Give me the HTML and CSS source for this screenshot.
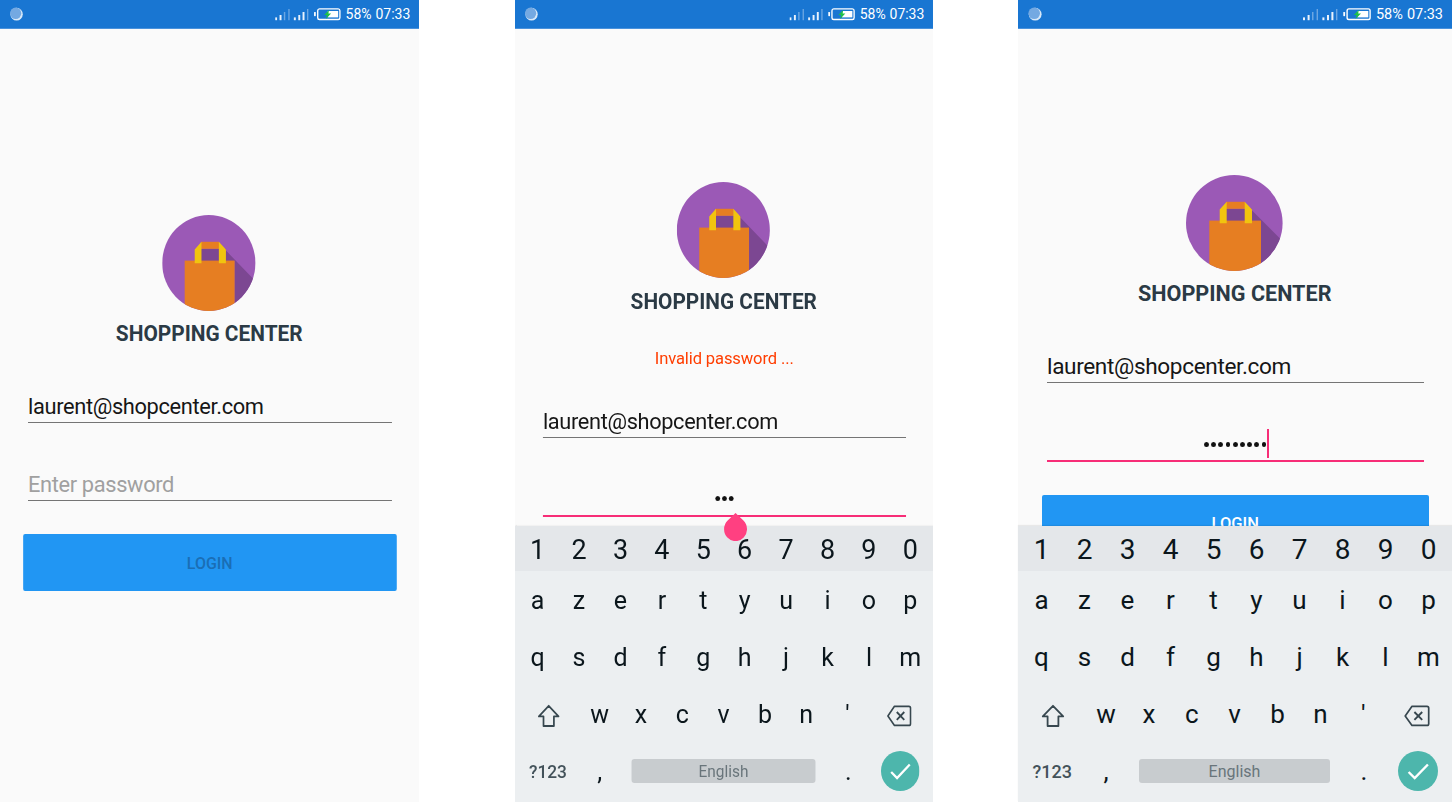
FILE: index.html
```html
<!DOCTYPE html>
<html lang="en">
<head>
<meta charset="utf-8">
<title>Shopping Center</title>
<link rel="stylesheet" href="styles.css">
</head>
<body>
<svg class="defs" aria-hidden="true">
  <defs>
    <clipPath id="disc"><ellipse cx="48.3" cy="48" rx="48.3" ry="48"/></clipPath>
    <symbol id="logo" viewBox="0 0 97 96">
      <g clip-path="url(#disc)">
        <rect width="97" height="96" fill="#9b59b6"/>
        <path d="M64 33.5 97 66.5V96H75V46H66V34z" fill="#7c4792"/>
        <rect x="40" y="34" width="19.5" height="13" fill="#7c4792"/>
        <rect x="23.3" y="45.6" width="51.7" height="51" fill="#e67e22"/>
        <rect x="40" y="26.8" width="19" height="7" fill="#e67e22"/>
        <path d="M33.7 34.5 40.7 26.8V48.2H33.7zM66 34.5 58.7 26.8V48.2H66z" fill="#f1c40f"/>
      </g>
    </symbol>
    <symbol id="dot" viewBox="0 0 14 14">
      <circle cx="7.2" cy="7.2" r="6.4" fill="#d7e8f8"/>
      <circle cx="6.2" cy="6.3" r="5.8" fill="#74a9e2"/>
    </symbol>
    <symbol id="status" viewBox="0 0 69 14">
      <g fill="#e9f2fc">
        <rect x="0" y="10.4" width="2" height="2.8"/><rect x="4.6" y="8" width="2" height="5.2"/>
        <rect x="19.4" y="10.4" width="2" height="2.8"/><rect x="24" y="8" width="2" height="5.2"/><rect x="28.4" y="5" width="2" height="8.2"/>
      </g>
      <g fill="#6ba6e2">
        <rect x="9" y="5" width="1.5" height="8.2"/><rect x="13.6" y="2" width="1.4" height="11.2"/>
        <rect x="33" y="2" width="1.4" height="11.2"/>
      </g>
      <rect x="40.3" y="5" width="1.8" height="4.2" rx=".6" fill="#fff"/>
      <rect x="44.1" y="1.9" width="23" height="10.6" rx="1.8" fill="none" stroke="#fff" stroke-width="1.4"/>
      <rect x="54.5" y="4" width="10.8" height="6.4" fill="#fff"/>
      <path d="M55.8 3 50.8 7.9h2.8L52.6 12 58 6.6h-2.8z" fill="#1fc04a"/>
    </symbol>
    <symbol id="shift" viewBox="0 0 24 24">
      <path d="M12 1.8 22.2 12.4H17.4V22H6.6V12.4H1.8z" fill="none" stroke="#37474f" stroke-width="1.8" stroke-linejoin="round"/>
    </symbol>
    <symbol id="erase" viewBox="0 0 26 22">
      <path d="M8 1.3H23q1.7 0 1.7 1.7V18.7q0 1.7-1.7 1.7H8L1.2 10.9z" fill="none" stroke="#37474f" stroke-width="1.7" stroke-linejoin="round"/>
      <path d="M10.4 7 18.2 14.8M18.2 7 10.4 14.8" stroke="#37474f" stroke-width="1.9"/>
    </symbol>
    <symbol id="done" viewBox="0 0 40 40">
      <circle cx="20" cy="20" r="20" fill="#4db6ac"/>
      <path d="M10.6 21 16.7 27 29.9 13.5" fill="none" stroke="#fff" stroke-width="2.4"/>
    </symbol>
    <symbol id="handle" viewBox="0 0 24 28">
      <path d="M12 0 20.2 7.6A11.9 11.9 0 1 1 3.8 7.6z" fill="#ff4081"/>
    </symbol>
  </defs>
</svg>

<main class="board">
  <section class="slot slot-a">
    <div class="phone">
      <header class="status"><svg class="dot"><use href="#dot"/></svg><svg class="signals"><use href="#status"/></svg><span class="pct">58%</span><span class="time">07:33</span></header>
      <div class="form">
        <svg class="logo"><use href="#logo"/></svg>
        <h1 class="title">SHOPPING CENTER</h1>
        <div class="field email">laurent@shopcenter.com</div>
        <div class="field password hint">Enter password</div>
        <div class="login off">LOGIN</div>
      </div>
    </div>
  </section>

  <section class="slot slot-b">
    <div class="phone">
      <header class="status"><svg class="dot"><use href="#dot"/></svg><svg class="signals"><use href="#status"/></svg><span class="pct">58%</span><span class="time">07:33</span></header>
      <div class="form">
        <svg class="logo"><use href="#logo"/></svg>
        <h1 class="title">SHOPPING CENTER</h1>
        <p class="error">Invalid password ...</p>
        <div class="field email">laurent@shopcenter.com</div>
        <div class="field password active"><span class="dots"><i></i><i></i><i></i></span><svg class="handle"><use href="#handle"/></svg></div>
      </div>
      <div class="keyboard">
        <div class="row digits"><b>1</b><b>2</b><b>3</b><b>4</b><b>5</b><b>6</b><b>7</b><b>8</b><b>9</b><b>0</b></div>
        <div class="row"><b>a</b><b>z</b><b>e</b><b>r</b><b>t</b><b>y</b><b>u</b><b>i</b><b>o</b><b>p</b></div>
        <div class="row"><b>q</b><b>s</b><b>d</b><b>f</b><b>g</b><b>h</b><b>j</b><b>k</b><b>l</b><b>m</b></div>
        <div class="row split"><b><svg class="shift"><use href="#shift"/></svg></b><b>w</b><b>x</b><b>c</b><b>v</b><b>b</b><b>n</b><b>'</b><b><svg class="erase"><use href="#erase"/></svg></b></div>
        <div class="row bottom"><b class="mode">?123</b><b>,</b><b class="space">English</b><b>.</b><b><svg class="done"><use href="#done"/></svg></b></div>
      </div>
    </div>
  </section>

  <section class="slot slot-c">
    <div class="phone">
      <header class="status"><svg class="dot"><use href="#dot"/></svg><svg class="signals"><use href="#status"/></svg><span class="pct">58%</span><span class="time">07:33</span></header>
      <div class="form">
        <svg class="logo"><use href="#logo"/></svg>
        <h1 class="title">SHOPPING CENTER</h1>
        <div class="field email">laurent@shopcenter.com</div>
        <div class="field password active"><span class="dots"><i></i><i></i><i></i><i></i><i></i><i></i><i></i><i></i><i></i></span><span class="caret"></span></div>
        <div class="login">LOGIN</div>
      </div>
      <div class="keyboard">
        <div class="row digits"><b>1</b><b>2</b><b>3</b><b>4</b><b>5</b><b>6</b><b>7</b><b>8</b><b>9</b><b>0</b></div>
        <div class="row"><b>a</b><b>z</b><b>e</b><b>r</b><b>t</b><b>y</b><b>u</b><b>i</b><b>o</b><b>p</b></div>
        <div class="row"><b>q</b><b>s</b><b>d</b><b>f</b><b>g</b><b>h</b><b>j</b><b>k</b><b>l</b><b>m</b></div>
        <div class="row split"><b><svg class="shift"><use href="#shift"/></svg></b><b>w</b><b>x</b><b>c</b><b>v</b><b>b</b><b>n</b><b>'</b><b><svg class="erase"><use href="#erase"/></svg></b></div>
        <div class="row bottom"><b class="mode">?123</b><b>,</b><b class="space">English</b><b>.</b><b><svg class="done"><use href="#done"/></svg></b></div>
      </div>
    </div>
  </section>
</main>
</body>
</html>
```
FILE: styles.css
```css
* { box-sizing: border-box; }
body { margin: 0; background: #fff; font-family: Roboto, "Liberation Sans", sans-serif; overflow: hidden; }
.defs { position: absolute; width: 0; height: 0; }
svg { display: block; flex: none; }

.board { display: flex; justify-content: space-between; width: 1452px; height: 802px; }
.slot { flex: none; height: 802px; }
.slot-a { width: 419px; margin-right: 96px; }
.slot-b { width: 418px; margin-right: 85px; }
.slot-c { width: 434px; }

/* every screen is laid out 434px wide and fitted to its slot */
.phone { display: flex; flex-direction: column; width: 434px; height: 802px; background: #fafafa; transform-origin: 0 0; }
.slot-a .phone { transform: scaleX(.9654); }
.slot-b .phone { transform: scaleX(.9631); }

.status { display: flex; align-items: center; flex: none; height: 29px; padding: 0 9px 0 10px; background: #1976d2; border-bottom: 1px solid #4a92dc; color: #fff; font-size: 14.5px; line-height: 28px; }
.dot { width: 14px; height: 14px; }
.signals { width: 69px; height: 14px; margin-left: auto; }
.status span { padding-top: 1px; }
.pct { margin-left: 4px; }
.time { margin-left: 4px; }

.form { display: flex; flex-direction: column; flex: 1; min-height: 0; padding: 0 28.5px 0 29px; overflow: hidden; }
.slot-a .form { padding-top: 186px; }
.slot-b .form { padding-top: 153px; overflow: visible; }
.slot-c .form { padding-top: 146px; }
.logo { align-self: center; width: 97px; height: 96px; margin-right: 2px; }
.title { flex: none; margin: 10px 1px 0 0; font-size: 21.6px; line-height: 26px; font-weight: 700; text-align: center; color: #2b3a45; white-space: nowrap; }
.slot-b .title { margin-top: 11px; }
.error { flex: none; margin: 33px 0 0; font-size: 17.2px; line-height: 20px; letter-spacing: -.13px; text-align: center; color: #ff3d00; }
.field { position: relative; flex: none; height: 40px; padding-top: 7px; border-bottom: 1px solid #747474; font-size: 22.6px; line-height: 34px; letter-spacing: -.36px; color: #161616; }
.email { margin-top: 36px; }
.slot-b .email { margin-top: 30px; }
.password { margin-top: 38px; }
.hint { color: #a0a0a0; }
.active { display: flex; justify-content: center; padding-top: 6px; border-bottom: 2px solid #f72d77; margin-top: 39px; }
.dots { display: flex; gap: 2.4px; padding-top: 14px; }
.dots i { width: 4.8px; height: 5px; border-radius: 50%; background: #111; }
.slot-b .dots { gap: 2.2px; padding-top: 13px; }
.slot-b .dots i { width: 5px; }
.caret { width: 2px; height: 29px; margin: 1px -3px 0 1px; background: #f72d77; }
.handle { position: absolute; z-index: 2; left: 188px; top: 36px; width: 24px; height: 28px; }
.login { flex: none; height: 57px; margin: 33px -5px 0; border-radius: 2px; background: #2196f3; color: #fff; font-size: 16.5px; font-weight: 500; line-height: 58px; text-align: center; }
.off { margin-top: 33px; line-height: 60px; color: #1a6eb5; }

.keyboard { display: grid; grid-template-rows: 45px 57px 57px 58px 1fr; flex: none; height: 276px; background: #eceff1; box-shadow: 0 -1px 1px rgba(0,0,0,.07); color: #0b161c; }
.row { display: grid; grid-template-columns: repeat(10, 43px); padding: 0 2px; font-size: 26px; }
.row b { display: flex; align-items: center; justify-content: center; font-weight: 400; }
.digits { background: #e4e7ea; font-size: 28px; padding-top: 2px; }
.split { grid-template-columns: 64.5px repeat(7, 42.9px) 65.2px; }
.bottom { grid-template-columns: 64.5px 43px 215px 43px 64.5px; padding-bottom: 3px; }
.shift { width: 24px; height: 24px; margin: 3px 0 0 1px; }
.erase { width: 26px; height: 22px; margin-top: 4px; }
.done { width: 40px; height: 40px; }
.row .mode { font-size: 18px; font-weight: 500; color: #43525a; }
.row .space { align-self: center; height: 24px; margin: 0 12.5px 0 11.5px; border-radius: 3px; background: #c8cccf; color: #69757b; font-size: 16px; }
```
